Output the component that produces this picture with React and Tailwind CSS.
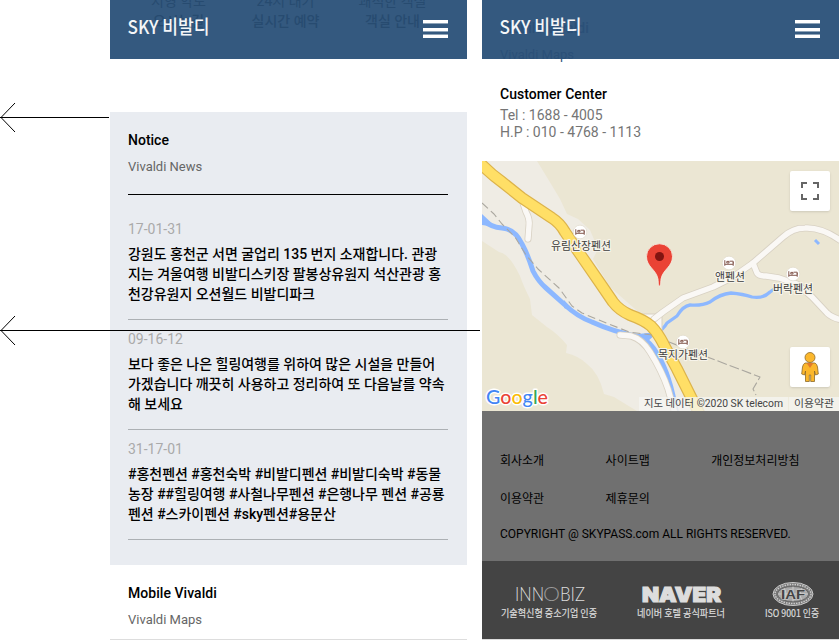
import React from "react";

const notices = [
  {
    date: "17-01-31",
    lines: ["강원도 홍천군 서면 굴업리 135 번지 소재합니다. 관광", "지는 겨울여행 비발디스키장 팔봉상유원지 석산관광 홍", "천강유원지 오션월드 비발디파크"],
  },
  {
    date: "09-16-12",
    lines: ["보다 좋은 나은 힐링여행를 위하여 많은 시설을 만들어", "가겠습니다 깨끗히 사용하고 정리하여 또 다음날를 약속", "해 보세요"],
  },
  {
    date: "31-17-01",
    lines: ["#홍천펜션 #홍천숙박 #비발디펜션 #비발디숙박 #동물", "농장 ##힐링여행 #사철나무펜션 #은행나무 펜션 #공룡", "펜션 #스카이펜션 #sky펜션#용문산"],
  },
];

const links = ["회사소개", "사이트맵", "개인정보처리방침", "이용약관", "제휴문의"];

function Header({ children }) {
  return (
    <header className="relative h-[59px] shrink-0 bg-[#34597f]">
      {children}
      <div className="relative flex h-full justify-between pl-[17px] pr-[19px]">
        <svg width="84" height="40" className="mt-[12px]">
          <text x="0.5" y="22" textLength="82" lengthAdjust="spacingAndGlyphs" fontSize="19" fontWeight="500" fill="#f4f6f8" fontFamily='"Noto Sans CJK KR", sans-serif'>SKY 비발디</text>
        </svg>
        <div className="mt-[20px] flex h-[18px] w-[25px] flex-col justify-between">
          <span className="h-[3px] bg-white shadow-[0_1px_0_#8da3b8]" />
          <span className="h-[3px] bg-white shadow-[0_1px_0_#8da3b8]" />
          <span className="h-[3px] bg-white shadow-[0_-1px_0_#8da3b8]" />
        </div>
      </div>
    </header>
  );
}

function Poi({ x, y }) {
  return (
    <g transform={`translate(${x} ${y})`}>
      <circle r="6.8" fill="#fff" stroke="#ddd6c8" strokeWidth="0.6" />
      <path d="M-4.2-2.8V2.8M4.2-1V2.8M-4.2 1.3H4.2M-2.2-1.6H0V0H-2.2ZM0.6-1.8H4.2V0.6" fill="none" stroke="#84594f" strokeWidth="1" />
    </g>
  );
}

function Label({ x, y, w, children }) {
  return (
    <text x={x} y={y} textLength={w} lengthAdjust="spacingAndGlyphs" fontSize="11.5" fill="#3d3d3d" stroke="#f7f4ea" strokeWidth="2.4" strokeLinejoin="round" paintOrder="stroke">
      {children}
    </text>
  );
}

const MAIN_ROAD = "M-6-1L0 4Q10 14 20 21L40 37L70 57Q78 62 83 71L100 96L118 122L131 141Q137 149 148 154Q162 159 169 165Q176 172 182 184L195 208L222 262";
const HILL_ROAD = "M172 158L181 151L201 137L231 126L251 116L271 102L301 76Q311 67 323 67Q341 66 362 82";
const SIDE_ROAD = "M271 102L275 112Q277 115 284 115L297 117L315 123L330 136L345 152Q350 157 360 159";
const RIVER_ROAD = "M138 174L149 175Q160 178 168 191Q180 210 186 228L194 256";
const SPUR = "M41 42L44 51Q48 58 47 65L46 78";

function MapView() {
  return (
    <div className="relative h-[250px] shrink-0 overflow-hidden bg-[#ebe6d3]">
      <svg width="357" height="250" viewBox="0 0 357 250" className="block" fontFamily='"Noto Sans CJK KR", sans-serif'>
        <path d="M0 0H55L66 18L78 38L85 53L96 58L108 69L116 88L111 98L128 126L170 163L178 175L216 250H155L145 244L132 236L122 233Q117 212 105 203Q97 195 84 192L85 184Q76 173 65 166L50 154L48 138Q41 124 38 115Q27 92 17 91L0 80Z" fill="#efece4" />
        <g fill="none" strokeLinejoin="round">
          <path d="M0 58Q8 66 20 67Q33 68 40 83Q46 94 51 110Q56 120 64 127L83 144Q96 156 110 161Q132 171 158 176Q168 180 176 194Q189 216 195 256" stroke="#8db8ff" strokeWidth="5" />
          <path d="M0 53L14 66L0 64ZM82 139L94 152L82 147ZM156 173L176 171L164 182Z" fill="#8db8ff" stroke="none" />
          <path d="M158 176L174 172Q181 169 185 162L195 155Q201 145 208 144Q220 145 228 141Q238 133 249 132Q261 133 270 136Q281 138 288 131L298 124L311 120L322 127L336 140" stroke="#8db8ff" strokeWidth="3.3" />
          <path d="M333 79L337 83" stroke="#8db8ff" strokeWidth="3" />
          <path d="M156 153L173 153L180 149V171L170 166Z" fill="#faf8f5" stroke="#d8d1c3" strokeWidth="1" />
          <g stroke="#d8d1c3" strokeWidth="7" strokeLinecap="round">
            <path d={HILL_ROAD} /><path d={SIDE_ROAD} /><path d={RIVER_ROAD} /><path d={SPUR} />
          </g>
          <g stroke="#faf8f5" strokeWidth="5.4" strokeLinecap="round">
            <path d={HILL_ROAD} /><path d={SIDE_ROAD} /><path d={RIVER_ROAD} /><path d={SPUR} />
          </g>
          <path d={MAIN_ROAD} stroke="#dcb34b" strokeWidth="12" />
          <path d={MAIN_ROAD} stroke="#ffdf66" strokeWidth="9.6" />
          <path d="M0 42L12 53L20 63L33 76L44 94L56 108L77 127L90 145L100 152L117 159L147 171L170 174" stroke="#aaa79f" strokeWidth="1.1" strokeDasharray="8 4" />
          <path d="M187 181L228 197L278 216L271 228L274 234" stroke="#aaa79f" strokeWidth="1.1" strokeDasharray="10 3" />
        </g>
        <Poi x={98} y={71} />
        <Poi x={247} y={102} />
        <Poi x={311} y={113} />
        <Poi x={201} y={181} />
        <Label x={69} y={89} w={60}>유림산장펜션</Label>
        <Label x={233} y={120} w={30}>앤펜션</Label>
        <Label x={291} y={132} w={40}>버락펜션</Label>
        <Label x={176} y={198} w={50}>목지가펜션</Label>
        <path d="M177.500 125C176.500 125 176.500 123 176 118C174 108 164.500 106 164.500 95.500A13 12.700 0 0 1 190.500 95.500C190.500 106 181 108 179 118C178.500 123 178.500 125 177.500 125Z" fill="#ea4335" stroke="#f7efe3" strokeWidth="0.8" />
        <circle cx="177.500" cy="95.500" r="4.500" fill="#811411" />
        <g fontSize="20" fontWeight="500" fontFamily="Lato, sans-serif">
          <text x="4" y="242.500" textLength="62" lengthAdjust="spacingAndGlyphs" stroke="#fff" strokeWidth="2.800" strokeLinejoin="round" paintOrder="stroke">
            <tspan fill="#4285f4">G</tspan><tspan fill="#ea4335">o</tspan><tspan fill="#fbbc05">o</tspan><tspan fill="#4285f4">g</tspan><tspan fill="#34a853">l</tspan><tspan fill="#ea4335">e</tspan>
          </text>
        </g>
        <path d="M157 236H357V250H157Z" fill="#f5f5f2" fillOpacity="0.78" />
        <path d="M306.500 236V250" stroke="#eeebdd" />
        <g fontSize="10" fill="#444" fontFamily='Roboto, "Noto Sans CJK KR", sans-serif'>
          <text x="162" y="246" textLength="139" lengthAdjust="spacingAndGlyphs">지도 데이터 ©2020 SK telecom</text>
          <text x="312" y="246" textLength="40" lengthAdjust="spacingAndGlyphs">이용약관</text>
        </g>
      </svg>
      <div className="absolute right-[9px] top-[10px] flex size-10 items-center justify-center rounded-xs bg-white shadow">
        <svg width="18" height="18" viewBox="0 0 18 18" fill="none" stroke="#666" strokeWidth="2">
          <path d="M1 6V1H6M12 1H17V6M17 12V17H12M6 17H1V12" />
        </svg>
      </div>
      <div className="absolute right-[9px] top-[186px] flex size-10 items-center justify-center rounded-xs bg-white shadow">
        <svg width="18" height="32" viewBox="0 0 18 32" fill="#fbb72c" stroke="#8b6a2b" strokeWidth="0.8">
          <path d="M4 12H14Q16 13 16.500 16L17.300 23L14.500 24L13.500 20V30.500H9.700V24H8.300V30.500H4.500V20L3.500 24L0.700 23L1.500 16Q2 13 4 12Z" />
          <path d="M5.500 12H12.500L9 17Z" fill="#e17b2d" stroke="none" />
          <circle cx="9" cy="6.500" r="5" />
        </svg>
      </div>
    </div>
  );
}

function Certifications() {
  return (
    <div className="h-[78px] shrink-0 bg-[#444]">
      <svg width="357" height="78" className="block" fill="#ddd" fontFamily='"Noto Sans CJK KR", sans-serif'>
        <g fontFamily="Lato, sans-serif" fontSize="20" fontWeight="300">
          <text x="33" y="40" textLength="29" lengthAdjust="spacingAndGlyphs">INN</text>
          <text x="61" y="40" textLength="17" lengthAdjust="spacingAndGlyphs" fill="#999">O</text>
          <text x="78" y="40" textLength="25" lengthAdjust="spacingAndGlyphs">BIZ</text>
        </g>
        <text x="160" y="41" textLength="79" lengthAdjust="spacingAndGlyphs" fontFamily="Inter, sans-serif" fontSize="20.500" fontWeight="900" stroke="#ddd" strokeWidth="1.200">NAVER</text>
        <ellipse cx="311" cy="33" rx="20" ry="11.500" fill="#777" stroke="#ccc" />
        <ellipse cx="311" cy="33" rx="18" ry="9.500" fill="none" stroke="#ccc" strokeWidth="1.500" strokeDasharray="1.500 1" />
        <ellipse cx="311" cy="33" rx="15.500" ry="7.500" fill="#aaa" stroke="#444" strokeWidth="0.500" />
        <path d="M296 33H326M311 25.500V40.500M302 27Q306 33 302 39M320 27Q316 33 320 39" fill="none" stroke="#ddd" strokeWidth="0.700" />
        <text x="299" y="38" textLength="24" lengthAdjust="spacingAndGlyphs" fontFamily='"Liberation Sans", sans-serif' fontSize="13" fontWeight="700" fill="#444" stroke="#ccc" strokeWidth="1" paintOrder="stroke">IAF</text>
        <g fontSize="10.500" fontWeight="400" stroke="#ddd" strokeWidth="0.200">
          <text x="19" y="56" textLength="96" lengthAdjust="spacingAndGlyphs">기술혁신형 중소기업 인증</text>
          <text x="155" y="56" textLength="88" lengthAdjust="spacingAndGlyphs">네이버 호텔 공식파트너</text>
          <text x="283" y="56" textLength="54" lengthAdjust="spacingAndGlyphs">ISO 9001 인증</text>
        </g>
      </svg>
    </div>
  );
}

export default function App() {
  return (
    <main className="relative flex h-[640px] w-[839px] overflow-hidden bg-white pl-[110px] font-[Roboto,'Noto_Sans_CJK_KR',sans-serif] text-black">
      <section className="flex w-[357px] shrink-0 flex-col border-b border-[#ddd]">
        <Header>
          <div className="absolute left-[15px] -top-[9px] grid grid-cols-[107px_107px_107px] text-center text-[14px] leading-5 text-[#274b70]">
            <span>지형 약도</span><span>24시 대기</span><span>쾌적한 객실</span>
            <b className="font-medium">오시는길</b><b className="font-medium">실시간 예약</b><b className="font-medium">객실 안내</b>
          </div>
        </Header>
        <div className="mt-[53px] h-[453px] shrink-0 bg-[#e9ecf1] pl-[18px] pr-[19px] pt-[18px]">
          <h2 className="text-[14px] font-medium leading-5">Notice</h2>
          <p className="mt-[7px] text-[13px] leading-5 text-[#666]">Vivaldi News</p>
          <hr className="mt-[17px] border-black" />
          <ul className="pt-[15px]">
            {notices.map((n) => (
              <li key={n.date} className="h-[110px] border-b border-[#acb0b4] pt-[9px]">
                <p className="text-[14px] leading-5 text-[#aaa]">{n.date}</p>
                <div className="mt-[5px] text-[14px] font-medium leading-5 tracking-[-0.02px]">
                  {n.lines.map((l) => <p key={l} className="whitespace-nowrap">{l}</p>)}
                </div>
              </li>
            ))}
          </ul>
        </div>
        <div className="px-[18px] pt-[18px]">
          <h2 className="text-[14px] font-medium leading-5 tracking-[0.05px]">Mobile Vivaldi</h2>
          <p className="mt-[7px] text-[13px] leading-5 text-[#666]">Vivaldi Maps</p>
        </div>
      </section>

      <section className="ml-[15px] flex w-[357px] shrink-0 flex-col border-b border-[#ddd]">
        <Header>
          <div className="absolute left-[18px] top-[18px] text-[#2b5078]">
            <p className="text-[14px] font-medium leading-5 tracking-[0.05px]">Mobile Vivaldi</p>
            <p className="mt-[7px] text-[13px] leading-5">Vivaldi Maps</p>
          </div>
        </Header>
        <div className="h-[102px] shrink-0 px-[18px] pt-[25px]">
          <h2 className="text-[14px] font-medium leading-5 tracking-[0.05px]">Customer Center</h2>
          <p className="mt-[3px] text-[14px] leading-[17px] text-[#757575]">Tel : 1688 - 4005<br />H.P : 010 - 4768 - 1113</p>
        </div>
        <MapView />
        <div className="h-[150px] shrink-0 bg-[#707070] px-[18px] pt-[40px] text-[12px] text-black">
          <nav className="grid grid-cols-[105.600px_105.600px_1fr] gap-y-[18px] leading-5">
            {links.map((l) => <a key={l}>{l}</a>)}
          </nav>
          <p className="mt-[15px] leading-5">COPYRIGHT @ SKYPASS.com ALL RIGHTS RESERVED.</p>
        </div>
        <Certifications />
      </section>

      <svg width="482" height="360" className="pointer-events-none absolute left-0 top-0" fill="none" stroke="#000">
        <path d="M0 117.500H109M15 103L1 117.500L15 132M0 330.500H480M15 316L1 330.500L15 345" />
      </svg>
    </main>
  );
}
